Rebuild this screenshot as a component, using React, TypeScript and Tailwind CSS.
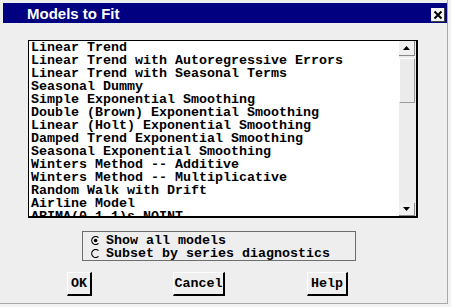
import React from "react";

const items = [
  "Linear Trend",
  "Linear Trend with Autoregressive Errors",
  "Linear Trend with Seasonal Terms",
  "Seasonal Dummy",
  "Simple Exponential Smoothing",
  "Double (Brown) Exponential Smoothing",
  "Linear (Holt) Exponential Smoothing",
  "Damped Trend Exponential Smoothing",
  "Seasonal Exponential Smoothing",
  "Winters Method -- Additive",
  "Winters Method -- Multiplicative",
  "Random Walk with Drift",
  "Airline Model",
  "ARIMA(0,1,1)s NOINT",
];

const mono = { fontFamily: '"Liberation Mono", "DejaVu Sans Mono", monospace' };

function Radio({ checked }: { checked: boolean }) {
  return (
    <svg width="9" height="9" viewBox="0 0 9 9" className="shrink-0">
      <path d="M7.5 1.6 A4 4 0 1 0 7.5 7.4" fill="none" stroke="#000" strokeWidth="1.2" />
      {checked && <circle cx="4.6" cy="4.5" r="1.8" fill="#000" />}
    </svg>
  );
}

function Btn({ label, w }: { label: string; w: string }) {
  return (
    <div
      className={`${w} h-[24px] flex items-center justify-center bg-[#efefef] border-t border-l border-t-white border-l-white border-r-2 border-b-2 border-r-black border-b-black text-[13.33px] font-bold text-black leading-none`}
      style={mono}
    >
      {label}
    </div>
  );
}

export default function App() {
  return (
    <div className="w-[451px] h-[307px] bg-[#f2f2f2] overflow-hidden">
      <div className="w-[448px] h-[304px] pt-[3px] pl-[3px] bg-[#eeeeee] border-r border-b border-[#a8a8a8] flex flex-col">
        <div className="w-[444px] h-[20px] bg-[#000080] flex items-center justify-between pl-[24px] pr-[2px]">
          <span
            className="text-white font-bold text-[15px] leading-none"
            style={{ fontFamily: '"Liberation Sans", Arial, sans-serif' }}
          >
            Models to Fit
          </span>
          <div className="w-[14px] h-[14px] mt-[4px] bg-[#f4f4f4] border-r border-b border-[#404040] flex items-center justify-center">
            <svg width="10" height="10" viewBox="0 0 10 10">
              <path d="M1.5 1.5 L8.5 8.5 M8.5 1.5 L1.5 8.5" stroke="#000" strokeWidth="2" />
            </svg>
          </div>
        </div>

        <div className="ml-[25px] mt-[17px] w-[390px] h-[178px] bg-white border-t border-l border-black border-r-2 border-b-2 flex overflow-hidden">
          <div className="flex-1 pl-[2px] overflow-hidden">
            {items.map((t) => (
              <div
                key={t}
                className="h-[13px] text-[13.33px] leading-[13px] font-bold text-black whitespace-pre"
                style={mono}
              >
                {t}
              </div>
            ))}
          </div>
          <div className="w-[17px] h-full bg-[#ececec] flex flex-col">
            <div className="h-[15px] w-[16px] bg-[#f0f0f0] border-r border-b border-[#8a8a8a] flex items-center justify-center">
              <svg width="7" height="4" viewBox="0 0 7 4">
                <path d="M0 4 L3.5 0 L7 4 Z" fill="#000" />
              </svg>
            </div>
            <div className="mt-[2px] h-[45px] w-[16px] bg-[#ebebeb] border-r border-b border-[#9a9a9a] border-t border-l border-t-white border-l-white" />
            <div className="flex-1" />
            <div className="h-[13px] w-[16px] bg-[#f0f0f0] border-r border-b border-[#8a8a8a] flex items-center justify-center">
              <svg width="7" height="4" viewBox="0 0 7 4">
                <path d="M0 0 L3.5 4 L7 0 Z" fill="#000" />
              </svg>
            </div>
          </div>
        </div>

        <div className="ml-[79px] mt-[13px] w-[274px] h-[30px] border border-[#6e6e6e] pt-[2px] pl-[8px]">
          <div className="flex items-center h-[13px] gap-[6px]">
            <Radio checked />
            <span className="text-[13.33px] leading-[13px] font-bold text-black" style={mono}>
              Show all models
            </span>
          </div>
          <div className="flex items-center h-[13px] gap-[6px]">
            <Radio checked={false} />
            <span className="text-[13.33px] leading-[13px] font-bold text-black" style={mono}>
              Subset by series diagnostics
            </span>
          </div>
        </div>

        <div className="mt-[11px] flex items-start">
          <div className="ml-[64px]">
            <Btn label="OK" w="w-[25px]" />
          </div>
          <div className="ml-[81px]">
            <Btn label="Cancel" w="w-[52px]" />
          </div>
          <div className="ml-[82px]">
            <Btn label="Help" w="w-[41px]" />
          </div>
        </div>
      </div>
    </div>
  );
}
